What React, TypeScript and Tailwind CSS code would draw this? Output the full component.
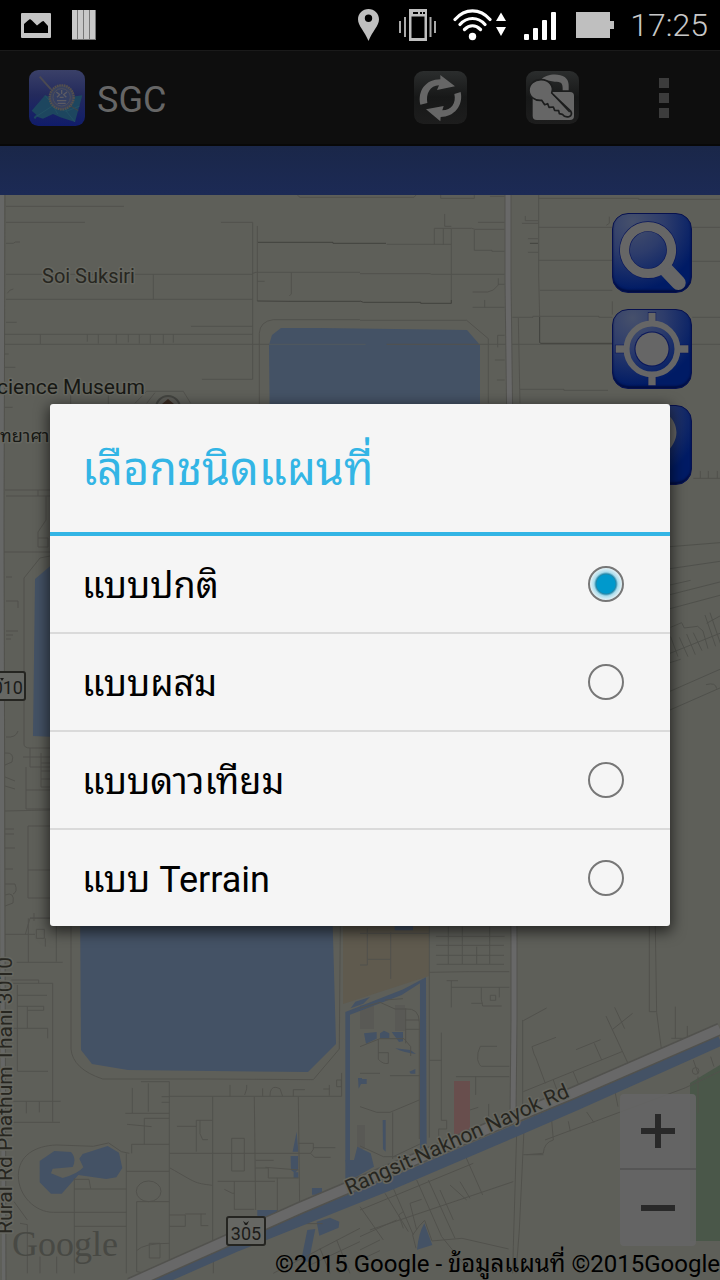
import { useState } from "react";
import type { ReactNode } from "react";

const FONT = "font-[Roboto,'Noto_Sans_Thai_Looped','Noto_Looped_Thai',Loma,Waree,'Noto_Sans',sans-serif]";

function StatusBar() {
  return (
    <header className="flex h-[50px] shrink-0 items-center bg-black pr-3 pl-[21px] text-[#c8c8c8]">
      <svg className="h-[25px] w-[30px]" viewBox="0 0 30 25" aria-hidden="true">
        <rect width="30" height="25" rx="1" fill="#c4c4c4" />
        <path d="M3 20V11l4-3.500 2-1.500 2 1.500 5 5 5-4 1.500-.500L27 13v7z" fill="#000" />
      </svg>
      <svg className="ml-[21px] h-[30px] w-6" viewBox="0 0 24 30" aria-hidden="true">
        <path d="M0 0h24v30H0z" fill="#777" />
        <path d="M0 0h5v29H0zM6 0h5v29H6zM12 0h5v29H12zM18 0h5v29H18z" fill="#c9c9c9" />
      </svg>
      <div className="ml-auto flex items-center">
        <svg className="h-8 w-[21px]" viewBox="0 0 21 32" aria-hidden="true">
          <path fillRule="evenodd" fill="#bfbfbf" d="M10.500 0C4.700 0 0 4.500 0 10.300 0 17 6.500 22 10.500 32 14.500 22 21 17 21 10.300 21 4.500 16.300 0 10.500 0zm0 5.500a3.700 3.700 0 1 1 0 7.400 3.700 3.700 0 0 1 0-7.400z" />
        </svg>
        <svg className="ml-5 h-8 w-[37px]" viewBox="0 0 37 32" aria-hidden="true">
          <path fillRule="evenodd" fill="#bfbfbf" d="M10 0h18v32H10zM12.500 7.500v21.500H25.500V7.500zM14 3v2h5V3zm7 0v2h2V3zm3 0v2h2V3z" />
          <path d="M1 12v12M6 8v20M31.500 8v20M36 12v12" stroke="#aaa" strokeWidth="2" />
        </svg>
        <svg className="ml-[17px] h-8 w-[53px]" viewBox="0 0 53 32" aria-hidden="true">
          <g fill="none" stroke="#fff" strokeWidth="3.200" strokeLinecap="round">
            <path d="M2 10.500C12 -1 27-1 37 10.500M7 15.500c7-8 18-8 25 0M11.500 20.500c5-5 11-5 16 0" />
          </g>
          <circle cx="19.500" cy="27.500" r="3.700" fill="#fff" />
          <path d="M48 3.500l5 8.500H43zM48 27l5-9H43z" fill="#fff" />
        </svg>
        <svg className="ml-[18px] h-[29px] w-8" viewBox="0 0 32 29" aria-hidden="true">
          <g fill="#fff">
            <rect y="23" width="5" height="6" rx="1" />
            <rect x="9" y="17" width="5" height="12" rx="1" />
            <rect x="18" y="9" width="5" height="20" rx="1" />
            <rect x="27" y="1" width="5" height="28" rx="1" />
          </g>
        </svg>
        <svg className="ml-5 h-[26px] w-[38px]" viewBox="0 0 38 26" aria-hidden="true">
          <path d="M0 0h34v9h4v8h-4v9H0z" fill="#bfbfbf" />
        </svg>
        <span className="ml-4 text-[32px] leading-10 font-light">17:25</span>
      </div>
    </header>
  );
}

function Logo() {
  return (
    <svg className="size-14" viewBox="0 0 168 168" aria-hidden="true">
      <defs>
        <linearGradient id="logoBg" x1="0" y1="0" x2="0" y2="1">
          <stop offset="0" stopColor="#3a4068" />
          <stop offset="0.45" stopColor="#232a5c" />
          <stop offset="1" stopColor="#101c6a" />
        </linearGradient>
      </defs>
      <rect width="168" height="168" rx="28" fill="url(#logoBg)" />
      <path d="M8 122L48 76l30 10 40-4 42-6-22 80-44-14-22-10-30 14-18-6-6 8-4-6 8-8z" fill="#1d465f" />
      <path d="M48 76l20 24 18 32M118 82l-6 42 26 32M24 138l46-30 42 16 40-16" fill="none" stroke="#265666" strokeWidth="2" />
      <path d="M32 20L66 58" stroke="#4b4a52" strokeWidth="6" />
      <path d="M122 106l26 16" stroke="#444" strokeWidth="3" />
      <circle cx="98" cy="82" r="36" fill="#39425f" stroke="#55504d" strokeWidth="7" strokeDasharray="5 2" />
      <circle cx="98" cy="82" r="26" fill="#343f62" stroke="#585659" strokeWidth="2" />
      <path d="M82 66l10 8-8 8M114 66l-10 8 8 8M98 60v12M84 92h28M86 100h24M92 82h12" fill="none" stroke="#5c5b63" strokeWidth="4" />
    </svg>
  );
}

function ActionBar() {
  return (
    <nav className="flex h-24 shrink-0 items-center border-t border-b-2 border-t-[#1a1a1a] border-b-[#080808] bg-[#0e0e0e] pl-[29px]">
      <Logo />
      <h1 className="ml-3 pt-1 text-4xl leading-10 text-[#666]">SGC</h1>
      <div className="ml-auto flex">
        <button aria-label="Refresh" className="flex h-16 w-28 items-center justify-center">
          <svg className="size-[53px]" viewBox="0 0 159 159">
            <defs>
              <linearGradient id="tile" x1="0" y1="0" x2="0" y2="1">
                <stop offset="0" stopColor="#2b2d2d" />
                <stop offset="0.5" stopColor="#171818" />
                <stop offset="1" stopColor="#1d1d1d" />
              </linearGradient>
            </defs>
            <rect width="159" height="159" rx="28" fill="url(#tile)" />
            <g fill="#666">
              <path d="M19 101C10 60 35 25 79 25V12l44 34-54 11 6-14C48 44 35 68 40 96z" />
              <path d="M140 63c9 40-20 75-60 75l-1 13-43-36 53-10-4 13c28 0 42-22 36-49z" />
            </g>
          </svg>
        </button>
        <button aria-label="Sign in" className="flex h-16 w-28 items-center justify-center">
          <svg className="size-[53px]" viewBox="0 0 159 159">
            <rect width="159" height="159" rx="28" fill="url(#tile)" />
            <path d="M46 25c14-17 54-19 70-7 12 9 13 21 12 40h-18c1-24-5-26-24-26" fill="#666" />
            <rect x="20" y="63" width="124" height="84" rx="12" fill="#666" />
            <path d="M45 26c26 0 40 22 32 40l57 54c4 7 3 15-5 17-9 2-16-1-20-7l-9-2-2-9-12-1-4-10-13 1-4-11-9 3-9-13C25 90 9 76 9 58c0-18 16-32 36-32z" fill="#666" stroke="#1c1d1d" strokeWidth="5" strokeLinejoin="round" />
            <path d="M81 70l50 53" stroke="#1c1d1d" strokeWidth="4" />
          </svg>
        </button>
        <button aria-label="More options" className="flex h-16 w-28 flex-col items-center justify-center gap-[5px]">
          <span className="size-2.5 bg-[#3c3c3c]" />
          <span className="size-2.5 bg-[#3c3c3c]" />
          <span className="size-2.5 bg-[#3c3c3c]" />
        </button>
      </div>
    </nav>
  );
}

function MapCanvas() {
  return (
    <svg
      className="absolute inset-0 h-full w-full"
      viewBox="0 195 720 1085"
      preserveAspectRatio="xMinYMin slice"
      role="img"
      aria-label="Map"
    >
      <rect y="195" width="720" height="1085" fill="#5e5f59" />

      {/* water */}
      <g fill="#445265">
        <path d="M269 345l3-10 9-7h40l146 2 13 15v100H270z" />
        <path d="M35 579l20-17v175l-22-1z" />
        <path d="M80 900h252l4 144-28 28-180-2-36-6-11-14z" />
      </g>

      {/* parks and built-up areas */}
      <path d="M343 926h86v50l-86 28z" fill="#5f5a4e" />
      <path d="M690 1083l30-18v176h-30z" fill="#4a5749" />
      <path d="M454 1081h16v48l-16 7z" fill="#684e4d" />
      <g fill="#595955">
        <path d="M360 1005h14v24h-14zM395 1005h10v26h-10zM357 1125h8v24h-8z" />
      </g>

      {/* minor roads, north west */}
      <g transform="translate(0 190) scale(.3333)" fill="none" stroke="#51514c" strokeWidth="3">
        <path d="M18 49h354M18 97h237M663 97h95v471H606M18 160h22l6-4h14M18 253h740M460 253v75M18 328h740M18 397h32M573 409h185M14 433h744M121 433v29M262 433v22M295 433v28M349 433v28M385 433v24M418 433v28M451 433v28M490 433v28M520 433v25M12 463h795M14 492h12M14 532h32M14 652h24" />
        <path d="M772 108v225M758 250l10-3h312M874 247v65l-6 6M772 274h22M892 15l8 7h180M778 660V430q2-36 42-41h260M22 310q6-12 18-13M405 640l35-36h110l22 36M440 640l25-32M212 610v40M325 610v40" />
        <path d="M774 157h225v3h81M772 333l98 1h210" stroke="#41413d" />
        <path d="M807 463h290" stroke="#50595c" />
      </g>

      {/* minor roads, north east */}
      <g transform="translate(360 190) scale(.3333)" fill="none" stroke="#51514c" strokeWidth="3">
        <path d="M0 22h162l6-7M242 15v10h101V15M390 19h44M254 72v37h20M354 97h80M223 163v-48h51v48h-51M250 115v48M275 115h60l10 3h89M343 120v61h53v3h38M0 251h210l5 2h219M274 163v177M80 163h143M338 306h45l17-6 15-15v-20M415 283h19M338 352h96M374 330v22M0 391h320l65 55v194M413 472v-36h21M405 510h29M411 570h23M80 463h1000" />
        <path d="M536 15v240l3 126M536 25h300v3h244M496 78v14h38M486 100h50M536 112h220M997 112h83M504 146h30M536 211h220M997 214h83M540 301h217M457 382h62v-3h198v3h40M997 382h83M757 334v40M748 80v20l-9 6M475 384l5 256M480 598h132v3h132M504 187h30M1000 865h80M1021 843v22M1045 843v22M1072 843v22" />
        <path d="M0 160h78M0 333l10 4h172v3h92v-10M539 381v77l4 2h214M510 160h24" stroke="#41413d" />
      </g>

      {/* west strip beside the dialog */}
      <g fill="none" stroke="#51514c" strokeWidth="1">
        <path d="M5 490h45M6 496h45M38 490v6M46 496v24l-8 12v15h10v-9H38M4 552h46M50 556l-10 2-16 20v166q0 4 6 4h20M6 577h6M6 601h12v7M6 631h12M6 635h7M6 639h5M6 737q10 1 12-6M23 757h27M30 748v19h20M26 767v42h24M41 753v34h9M41 763h9M41 771h9M41 779h9M26 790h24M5 753q10-1 7 9l-7 3M5 777l10 4M5 786l10 3M5 811l45-1M28 826v72h22M28 826h22M28 870h22M5 829h9M5 834h9M5 848h10M5 869h8M5 884h10q3 8-2 10M5 895q10-4 8 8l-8 3M34 913v8M30 918h20" />
      </g>
      {/* east strip beside the dialog */}
      <g transform="translate(400 540) scale(.3333)" fill="none" stroke="#4f504b" strokeWidth="3">
        <path d="M810 20l150-12M810 86l150-22M810 135l62-14M810 164l150-38M810 206l150-40M810 454l150-66M810 510l150-66M810 340l150-60M812 262l33-14 8 16 40-5 16 14 15 53M915 225l32 94M930 218l32 94M812 290l22 60M838 292l26 58M860 282l26 62M880 278l26 54M810 368l32-10M918 434q30-8 32 12M920 250l40-22" />
      </g>

      {/* south west */}
      <g transform="translate(0 900) scale(.3333)">
        <g fill="#445265">
          <path d="M119 783l44-30 50 3q18 20 5 45l-60 5-5 14 35 14q45-12 62-32l-12-26 10-14 75-24 34 20 10 46-18 28-30 5-84-12-50 56h-32l-34-34zM890 695l5 60h-17zM872 768h22v42l-10 8-11-8zM881 817h14v17h-14zM936 864h30v20h-30zM772 930h60v17l-60 22zM950 965l40-12 28 12-2 18-58 24zM922 990l24-3-20 100-22-8z" />
        </g>
        <g fill="none" stroke="#51514c" strokeWidth="3">
          <path d="M15 103h90M76 103l14-48h60M85 55v132M50 187h138M169 55v130M109 88h24v27h-24zM136 115v25M34 240h82v10M38 250h120v415M52 255v258M52 286h89M52 319h79v12H82M82 319v66M40 385h103v30M52 514h92M40 604h142M79 604v36M118 604v33M40 667h140M213 77v370q5 60 95 90h300l332 2 78-92 3-368" />
          <path d="M397 564v75M423 545h85v575M445 550v85M376 640h132M485 590h23M485 607h23M433 655h75M433 655v78M381 673l74 7M395 760v-27h113M379 760v360M379 814h129M508 589h517v-70M638 590v430M763 590l4 340M895 590l4 320M508 760h424l8-12v-18h-44M940 743h66M932 760l12 12h48M531 679h58v76M589 679v-18h48M600 661v40l8 18h16M695 715h38v98h-38zM510 804c80 45 70 45 127 52M767 781h54M767 804h38v30h91M653 844h172M703 844v85M673 868l24 12h6M703 928h60M832 834v104M896 810l-100-8M690 555v34M740 555v12l-6 18M788 565v24M810 588q0-28 18-26l12 4 8 23M880 589v-20h35M988 555v32M970 567h20M1010 540h14v20h-14z" />
          <path d="M55 827c0-60 50-90 115-92l110 4 46-10 38 26 24 5M55 827c0 60 50 110 105 110h220M223 835v285M223 867h156M223 838h44l5 28M223 979h156M42 905l40 55M60 970l22 4v146M120 1070v50M170 1070v50M508 945h48v34h-48M556 942h62M603 942v35h22M448 1030h32v44h-32zM410 905v210l30 5M410 905h98M410 1052q20-22 98-22M900 945l16 26h52" />
          <ellipse cx="446" cy="874" rx="37" ry="31" />
          <path d="M1080 985l-260 135M960 1045l30 75M1010 1020l40 100M920 1100l160-75M640 1055v65M835 938l58-24" />
        </g>
      </g>

      {/* south east */}
      <g transform="translate(360 900) scale(.3333)">
        <g fill="#445265">
          <path d="M-44 336l174-68 68-36 2 500-20 16V250l-55 35L-30 344v500l-14 20zM104 77h55v14h-55zM12 400l38-4v20l-32 15zM60 400l12-8 16 8v15H60zM95 396h34v28l-12 2zM106 445l45 5 17 12q-40-4-62-17zM148 515l18-8v14h-14zM0 537h20v15H0zM68 660h9v95l-8-8zM193 970l24 65-46 14q5-50 22-79z" />
          <path d="M-44 780h26l10-40 40 20 10 40-70 40zM-14 305l44-14-20 20-38 14zM-6 534h12v12l-10 20z" />
        </g>
        <g fill="none" stroke="#51514c" strokeWidth="3">
          <path d="M0 100h208M22 85v110H0M92 97v140M22 178h70M208 77v636M228 109h206M228 136h204M228 166h204M230 193h202M265 80v112M307 80v112M350 140v52M389 80v112M208 217l120-2h120M274 322v-80M260 242h34M274 262h174M364 262v36l4 20h57M334 310h34M391 286h16v15h-16zM418 262v30M244 398v263h16v26h-24v20M208 481h36M411 439h-50q-10 18-8 40 6 20 12 20h83M288 530h160M347 530v55M386 612v40M330 630l25-8" />
          <path d="M0 325l60-18 45 20 32 0q40-4 41 40v350M137 325v105M137 360h41M137 388h41M0 440l60-24h72l20 24v28M55 418v60q15 16 30 12v-32H55M0 520h60M90 527h88M50 637h40l88-37M0 620l50 17M98 637v140M0 738l70 32h110M100 770l80-38M75 300l54-4" />
          <path d="M490 362l70-38M488 360v290M516 440l72-28M516 440q6 26 12 34l28 76M490 575l296-120M648 449l74-30M703 430l22 50M640 516l16 38M580 540l10 28M738 348l66 142M764 322l30 64M758 388l60-48M868 77v258h20M886 77l4 260 14 108M946 320v95M982 378v35M934 415h40M555 720l420-156 105-50M575 660l5 60M580 720q-28 8-30 40l-50 4M625 664l6 30M680 636l22 32M764 570l10 50M1000 480l14 40M1052 470l10 30M1014 530v110M490 764h60" />
          <path d="M470 700l-10 340-2 80M492 690l-14 300-10 130M306 745l62 140M0 930l340-140M30 990l430-145M0 1010l110-50M75 880l70 115M100 865l60 140M170 840l75 170 65 80M205 840l50 110 30 65M0 1080l60-28M0 920l70 100M150 910l20 80M150 910l35-12M240 870l40 90M270 855l50 45M300 845l30 50M158 1005q20-30 36-44l22 62 90-8 140 32M158 1005l10 40M0 1050l60-30M130 935l-14 10 14 40" />
          <circle cx="1007" cy="513" r="10" />
        </g>
      </g>

      {/* major roads and the canal that follows them */}
      <path d="M2 195v640l2 445" fill="none" stroke="#666766" strokeWidth="4" />
      <path d="M5 195l-1 330 2 755" fill="none" stroke="#51514c" />
      <path d="M508 195v85l2 160 4 500v80l-1 95" fill="none" stroke="#52524e" strokeWidth="7" />
      <path d="M508 195v85l2 160 4 500v80l-1 95" fill="none" stroke="#686868" strokeWidth="5" />
      <path d="M140 1288L233 1247 393 1183 517 1130 577 1104 720 1040" fill="none" stroke="#445265" strokeWidth="12" />
      <path d="M130 1284L300 1208 510 1119 573 1093 720 1029" fill="none" stroke="#52524e" strokeWidth="13" />
      <path d="M130 1284L300 1208 510 1119 573 1093 720 1029" fill="none" stroke="#686868" strokeWidth="10" />

      {/* museum marker */}
      <circle cx="168" cy="408" r="12" fill="#5b5b56" stroke="#434440" strokeWidth="2" />
      <path d="M162 404l6-5 6 5z" fill="#392b22" />

      {/* road shields */}
      <g fill="#666763" stroke="#252521" strokeWidth="2">
        <rect x="-12" y="672" width="37" height="28" rx="2" />
        <rect x="227" y="1217" width="38" height="28" rx="2" />
      </g>
      <path d="M0 678h4l-2 3zM243 1221l3 2 3-2-2 4h-2z" fill="#1c1c1a" />
      <text x="23" y="694" textAnchor="end" fontSize="18" fill="#1c1c1a">010</text>
      <text x="246" y="1240" textAnchor="middle" fontSize="18" fill="#1c1c1a">305</text>

      {/* place and street names */}
      <g fill="#272620" stroke="#666760" strokeWidth="3" strokeLinejoin="round" paintOrder="stroke">
        <text x="42" y="283" fontSize="20">Soi Suksiri</text>
        <text x="145" y="394" textAnchor="end" fontSize="21" fill="#171814">cience Museum</text>
        <text x="0" y="442" fontSize="18" fill="#171814">ทยาศา</text>
        <text transform="translate(12 1234) rotate(-90)" fontSize="21">Rural Rd Phathum Thani 3010</text>
        <text transform="translate(349 1195) rotate(-24)" fontSize="21">Rangsit-Nakhon Nayok Rd</text>
      </g>
    </svg>
  );
}

function MapButton({ label, children }: { label: string; children: ReactNode }) {
  return (
    <button
      aria-label={label}
      className="size-20 rounded-2xl border border-[#07114f] bg-[radial-gradient(circle_at_25%_10%,#46506b_0%,#2d3c6b_35%,#001b65_75%)] shadow-[inset_0_-2px_2px_#000d40]"
    >
      <svg className="size-full" viewBox="0 0 236 236">
        {children}
      </svg>
    </button>
  );
}

function MapControls() {
  return (
    <>
      <div className="absolute top-[18px] right-7 flex flex-col gap-4">
        <MapButton label="Search">
          <circle cx="106" cy="109" r="71" fill="none" stroke="#09165a" strokeWidth="32" />
          <path d="M160 168l38 40" stroke="#666" strokeWidth="44" strokeLinecap="round" />
          <circle cx="106" cy="109" r="71" fill="none" stroke="#666" strokeWidth="28" />
        </MapButton>
        <MapButton label="My location">
          <path d="M118 6v40M118 190v40M6 118h40M190 118h40" stroke="#09165a" strokeWidth="25" />
          <g stroke="#666">
            <path d="M118 8v38M118 190v38M8 118h38M190 118h38" strokeWidth="22" />
            <circle cx="118" cy="118" r="77" fill="none" strokeWidth="18" />
          </g>
          <circle cx="118" cy="118" r="53" fill="#09165a" />
          <circle cx="118" cy="118" r="50" fill="#666" />
        </MapButton>
        <MapButton label="Map type">
          <path d="M118 12c-44 0-74 30-74 68 0 48 52 66 74 144 22-78 74-96 74-144 0-38-30-68-74-68z" fill="#666" />
        </MapButton>
      </div>
      <div className="absolute right-6 bottom-[34px] flex w-[76px] flex-col divide-y-2 divide-[#555] overflow-hidden rounded-sm bg-[#656565]/90">
        <button aria-label="Zoom in" className="flex h-[76px] items-center justify-center">
          <svg className="size-[34px]" viewBox="0 0 34 34">
            <path d="M17 0v34M0 17h34" stroke="#292929" strokeWidth="6" />
          </svg>
        </button>
        <button aria-label="Zoom out" className="flex h-[76px] items-center justify-center">
          <svg className="size-[34px]" viewBox="0 0 34 34">
            <path d="M0 17h34" stroke="#292929" strokeWidth="6" />
          </svg>
        </button>
      </div>
      <span className="absolute bottom-4 left-3 font-['Liberation_Serif',serif] text-4xl leading-10 text-[#484944]">
        Google
      </span>
      <p className="absolute right-0 bottom-0 text-2xl leading-8 whitespace-nowrap text-black">
        ©2015 Google - ข้อมูลแผนที่ ©2015Google
      </p>
    </>
  );
}

const OPTIONS = ["แบบปกติ", "แบบผสม", "แบบดาวเทียม", "แบบ Terrain"];

function MapTypeDialog() {
  const [selected, setSelected] = useState(0);
  return (
    <div className="absolute inset-0 flex items-center justify-center px-[50px] pt-[50px]">
      <section
        role="dialog"
        aria-labelledby="dialog-title"
        className="w-full max-w-[620px] rounded-[3px] bg-[#f5f5f5] shadow-[0_4px_14px_2px_rgba(0,0,0,0.6)]"
      >
        <h2
          id="dialog-title"
          className="flex h-[132px] items-center border-b-4 border-[#33b5e5] px-8 pt-1 text-[45px] leading-[60px] text-[#33b5e5]"
        >
          เลือกชนิดแผนที่
        </h2>
        <div className="divide-y-2 divide-[#dadada]">
          {OPTIONS.map((name, i) => (
            <label key={name} className="flex h-[98px] items-center justify-between pr-[46px] pl-8 text-4xl leading-[56px] text-black last:h-24">
              <span className="pt-1">{name}</span>
              <input
                type="radio"
                name="map-type"
                checked={selected === i}
                onChange={() => setSelected(i)}
                className="size-9 shrink-0 appearance-none rounded-full border-2 border-[#777] checked:bg-[radial-gradient(circle,#0099cc_0,#0099cc_9px,#2587a8_10px,#a9dcec_12px,#e5f2f6_16px)]"
              />
            </label>
          ))}
        </div>
      </section>
    </div>
  );
}

export default function App() {
  return (
    <div className={`relative flex min-h-screen flex-col overflow-hidden bg-black ${FONT}`}>
      <StatusBar />
      <ActionBar />
      <div className="h-[49px] shrink-0 bg-linear-to-b from-[#1a2749] to-[#1c2a55]" />
      <main className="relative flex-1 overflow-hidden">
        <MapCanvas />
        <MapControls />
      </main>
      <MapTypeDialog />
    </div>
  );
}
